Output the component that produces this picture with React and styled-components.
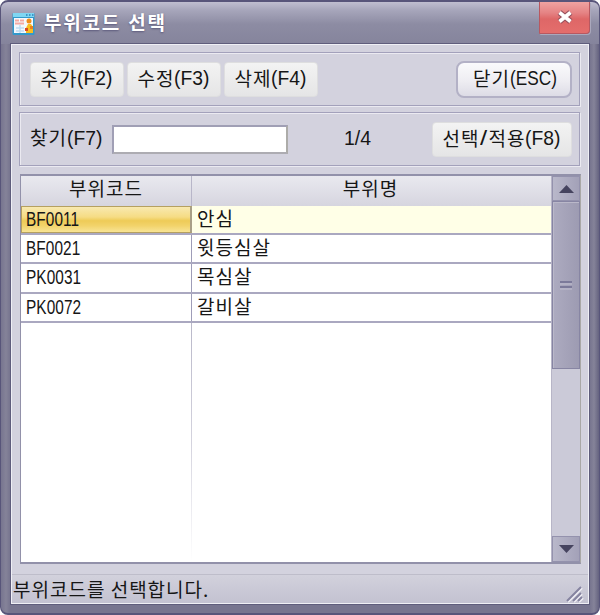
import styled, { createGlobalStyle } from 'styled-components';

const ROWS = [
  { code: 'BF0011', width: 55, name: '안심' },
  { code: 'BF0021', width: 55, name: '윗등심살' },
  { code: 'PK0031', width: 55, name: '목심살' },
  { code: 'PK0072', width: 56, name: '갈비살' },
];

const GlobalStyle = createGlobalStyle`
  * { box-sizing: border-box; }
  body { margin: 0; background: #fff; }
`;

const Window = styled.div`
  width: 600px;
  height: 615px;
  display: flex;
  flex-direction: column;
  padding: 0 9px 9px;
  overflow: hidden;
  border: 1px solid #58557a;
  border-top-width: 2px;
  border-bottom-width: 2px;
  border-radius: 8px;
  background:
    linear-gradient(180deg, #c0bed0 0, #a7a6bb 8px, #8d8ca3 22px, #85849c 42px, transparent 42px),
    linear-gradient(90deg, #77758f 0, #858399 5px, #77758f 9px, #77758f 589px, #858399 593px, #656380 100%);
  font-family: 'Noto Sans CJK KR', sans-serif;
  font-size: 19px;
  line-height: 28px;
  letter-spacing: 1px;
  color: #161616;
  white-space: nowrap;
`;

const TitleBar = styled.header`
  height: 41px;
  flex: none;
  display: flex;
  align-items: flex-start;
  padding-left: 2px;
`;

const AppIcon = styled.svg`
  width: 23px;
  height: 24px;
  margin-top: 10px;
`;

const Title = styled.h1`
  flex: 1;
  margin: 6px 0 0 9px;
  font-size: 19px;
  line-height: 28px;
  font-weight: 700;
  letter-spacing: 1.8px;
  word-spacing: 1px;
  color: #fff;
  text-shadow: 0 1px 2px #5d5a7c;
`;

const CloseButton = styled.button`
  width: 51px;
  height: 32px;
  padding: 0 0 1px;
  display: flex;
  align-items: center;
  justify-content: center;
  border: 1px solid #b85860;
  border-top: 0;
  border-radius: 0 0 4px 1px;
  background: linear-gradient(180deg, #efa3a1 0, #e58384 35%, #de6767 55%, #e46e6c 100%);
  box-shadow: 1px 1px 0 #aaa8bc;
`;

const Client = styled.main`
  flex: 1;
  display: flex;
  flex-direction: column;
  border: 1px solid #5f5d7c;
  box-shadow: inset 1px 1px 0 #efeff5, inset -1px -1px 0 #efeff5;
  background: #d3d2de;
  padding: 8px 9px 0 8px;
`;

const Panel = styled.section`
  height: 54px;
  flex: none;
  display: flex;
  align-items: center;
  margin-bottom: ${({ $gap }) => $gap}px;
  padding: 0 7px 0 10px;
  border: 1px solid #a3a1bb;
  box-shadow: inset 1px 1px 0 #ebeaf1, 1px 1px 0 #ebeaf1;
`;

const Button = styled.button`
  width: ${({ $width }) => $width}px;
  height: ${({ $focused }) => ($focused ? 37 : 35)}px;
  margin-right: ${({ $gap = 0 }) => $gap}px;
  padding: 0 0 3px;
  display: flex;
  align-items: center;
  justify-content: center;
  border: ${({ $focused }) => ($focused ? '2px solid #b3b1c6' : '1px solid #dededf')};
  border-radius: ${({ $focused }) => ($focused ? 8 : 4)}px;
  background: ${({ $focused }) =>
    $focused
      ? 'linear-gradient(180deg, #fafafc 0, #eeedf2 55%, #dddce6 100%)'
      : 'linear-gradient(180deg, #f3f3f3 0, #ececec 50%, #e5e5e6 100%)'};
  font: inherit;
  letter-spacing: inherit;
  color: inherit;
`;

const Narrow = styled.span`
  display: inline-block;
  width: ${({ $width }) => $width}px;
  font-family: 'Liberation Sans', sans-serif;
  font-size: 20.5px;
  letter-spacing: ${({ $spacing = 0 }) => $spacing}px;
  text-align: left;
  transform: scaleX(${({ $scale }) => $scale});
  transform-origin: left center;
`;

const Spacer = styled.div`
  flex: 1;
`;

const SearchLabel = styled.label`
  width: 82px;
  padding-bottom: 4px;
`;

const SearchInput = styled.input`
  width: 176px;
  height: 29px;
  padding: 0 4px;
  border: 2px solid #a09fb5;
  border-right-color: #adaca9;
  border-bottom-color: #adacb2;
  border-radius: 0;
  background: #fff;
  font: inherit;
`;

const Counter = styled.span`
  margin-left: 56px;
  padding-bottom: 4px;
`;

const Grid = styled.section`
  height: 390px;
  flex: none;
  display: grid;
  grid-template-columns: 1fr 29px;
  margin: 0 -1px 0 1px;
  border: 2px solid #9291aa;
  border-left-width: 1px;
  border-right: 1px solid #a9a8a6;
  background: #fff;
`;

const Table = styled.div`
  display: flex;
  flex-direction: column;
`;

const HeadRow = styled.div`
  height: 30px;
  display: grid;
  grid-template-columns: 171px 1fr;
  text-align: center;
  line-height: 24px;
  background: linear-gradient(180deg, #e9e9ef, #d6d5df);
`;

const HeadCell = styled.div`
  border-right: ${({ $divided }) => ($divided ? '1px solid #b8b6c9' : '0')};
  padding-right: ${({ $divided }) => ($divided ? 0 : 2)}px;
`;

const Row = styled.div`
  height: ${({ $height }) => $height}px;
  display: grid;
  grid-template-columns: 171px 1fr;
  border-bottom: 2px solid #aaa8c0;
  background: ${({ $selected }) => ($selected ? '#ffffe7' : '#fff')};
  line-height: 23px;
`;

const CodeCell = styled.div`
  border-right: 1px solid #9f9db8;
  padding-left: 5px;
  ${({ $selected }) =>
    $selected &&
    `
    padding-left: 4px;
    border: 1px solid #b5a060;
    border-right: 2px solid #a99f87;
    background: linear-gradient(180deg, #f8e9b0 0, #f6dc84 40%, #eecb57 55%, #f2d36b 75%, #f8e495 100%);
    line-height: 22px;
  `}
`;

const NameCell = styled.div`
  padding-left: 5px;
`;

const EmptyRows = styled.div`
  flex: 1;
  width: 171px;
  border-right: 1px solid;
  border-image: linear-gradient(180deg, #b9b8c9, #d4d3de 50%, #fff) 1;
`;

const ScrollBar = styled.div`
  display: flex;
  flex-direction: column;
  border-left: 1px solid #b7b5c7;
  background: #cbcad8;
`;

const ScrollButton = styled.button`
  height: ${({ $height }) => $height}px;
  padding: 0;
  display: flex;
  align-items: center;
  justify-content: center;
  border: 1px solid #9492ad;
  background: linear-gradient(90deg, #b9b8ca, #a3a1b8);
`;

const Thumb = styled.div`
  height: 168px;
  display: flex;
  align-items: center;
  justify-content: center;
  border: 1px solid #8785a3;
  box-shadow: inset 1px 1px 0 #bab8c9;
  background: linear-gradient(90deg, #adabc0, #9d9bb2);
`;

const StatusBar = styled.footer`
  flex: 1;
  display: flex;
  justify-content: space-between;
  align-items: flex-end;
  margin: 10px -8px 1px -7px;
  border-top: 1px solid #bebdca;
  background: linear-gradient(180deg, #d2d1dc, #c3c2d1);
`;

const StatusText = styled.span`
  padding-left: 1px;
  font-size: 19px;
  line-height: 28px;
`;

const Code = ({ children, width }) => (
  <Narrow $width={width} $scale={0.75} $spacing={0.1}>{children}</Narrow>
);

export default function App() {
  return (
    <>
      <GlobalStyle />
      <Window>
        <TitleBar>
          <AppIcon viewBox="0 0 23 24">
            <rect x="0.5" y="1" width="22" height="22" rx="1" fill="#3299cc" />
            <rect x="1" y="1" width="21" height="4" fill="#7fd6f2" />
            <path d="M14 3h1.500M17 3h1.500M20 3h1.500" stroke="#2a83ba" strokeWidth="1.500" />
            <rect x="2" y="6" width="19" height="15" fill="#f3f8fd" />
            <path d="M3 8.500h4M8 8.500h4M3 11.500h9" stroke="#f5a9a2" strokeWidth="2" />
            <path d="M4 16h8M4 19h8M8 13v8" stroke="#bfdcf3" strokeWidth="1.500" />
            <circle cx="17" cy="9" r="2.500" fill="#f08c1b" />
            <path d="M14 21v-5l2-4h3l2 3v6z" fill="#f8bd22" />
            <path d="M13 16h3v3h-3z" fill="#da4b27" />
            <path d="M18 14h3v3h-3z" fill="#e98220" />
          </AppIcon>
          <Title>부위코드 선택</Title>
          <CloseButton aria-label="닫기">
            <svg width="20" height="16" viewBox="0 0 20 16">
              <path d="M4.500 3.500l11 9M15.500 3.500l-11 9" stroke="#96505c" strokeWidth="6" />
              <path d="M4.500 3.500l11 9M15.500 3.500l-11 9" stroke="#fff" strokeWidth="3.600" />
            </svg>
          </CloseButton>
        </TitleBar>

        <Client>
          <Panel $gap={6}>
            <Button $width={94} $gap={3}>추가<Narrow $width={36} $scale={0.94}>(F2)</Narrow></Button>
            <Button $width={94} $gap={3}>수정<Narrow $width={36} $scale={0.94}>(F3)</Narrow></Button>
            <Button $width={94}>삭제<Narrow $width={36} $scale={0.94}>(F4)</Narrow></Button>
            <Spacer />
            <Button $width={116} $focused>닫기<Narrow $width={45} $scale={0.84}>(ESC)</Narrow></Button>
          </Panel>

          <Panel $gap={8}>
            <SearchLabel htmlFor="search">찾기<Narrow $width={36} $scale={0.94}>(F7)</Narrow></SearchLabel>
            <SearchInput id="search" />
            <Counter><Narrow $width={28} $scale={0.95}>1/4</Narrow></Counter>
            <Spacer />
            <Button $width={140}>
              선택<Narrow $width={9} $scale={1.25}>/</Narrow>적용<Narrow $width={36} $scale={0.94}>(F8)</Narrow>
            </Button>
          </Panel>

          <Grid>
            <Table>
              <HeadRow>
                <HeadCell $divided>부위코드</HeadCell>
                <HeadCell>부위명</HeadCell>
              </HeadRow>
              {ROWS.map((row, i) => (
                <Row key={row.code} $selected={i === 0} $height={i === 0 ? 29 : 29.3}>
                  <CodeCell $selected={i === 0}><Code width={row.width}>{row.code}</Code></CodeCell>
                  <NameCell>{row.name}</NameCell>
                </Row>
              ))}
              <EmptyRows />
            </Table>
            <ScrollBar>
              <ScrollButton $height={25}>
                <svg width="15" height="8"><path d="M0 8L7.500 0L15 8z" fill="#46445f" /></svg>
              </ScrollButton>
              <Thumb>
                <svg width="12" height="10">
                  <path d="M0 2h12M0 7h12" stroke="#7c7a9a" strokeWidth="2" />
                  <path d="M0 4h12M0 9h12" stroke="#c2c0d0" />
                </svg>
              </Thumb>
              <Spacer />
              <ScrollButton $height={26}>
                <svg width="15" height="8"><path d="M0 0h15L7.500 8z" fill="#46445f" /></svg>
              </ScrollButton>
            </ScrollBar>
          </Grid>

          <StatusBar>
            <StatusText>부위코드를 선택합니다.</StatusText>
            <svg width="22" height="19">
              <path d="M1 17L15 3M7 17l8-8M12 17l4-4" stroke="#f0eff5" strokeWidth="2" transform="translate(1 1)" />
              <path d="M1 17L15 3M7 17l8-8M12 17l4-4" stroke="#8583a0" strokeWidth="2" />
            </svg>
          </StatusBar>
        </Client>
      </Window>
    </>
  );
}
